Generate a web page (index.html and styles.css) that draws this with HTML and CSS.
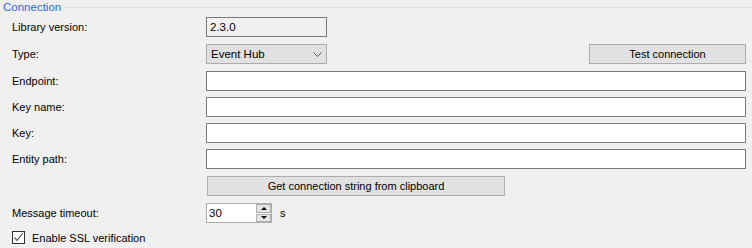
FILE: index.html
```html
<!DOCTYPE html>
<html lang="en">
<head>
    <meta charset="UTF-8">
    <title>Connection</title>
    <link rel="stylesheet" href="styles.css">
</head>
<body>
    <div class="group">
        <div class="group-title">
            <span>Connection</span>
            <div class="group-line"></div>
        </div>

        <div class="form">
            <label class="label">Library version:</label>
            <div class="field">
                <input type="text" class="textbox readonly short" value="2.3.0" readonly>
            </div>

            <label class="label">Type:</label>
            <div class="field split">
                <div class="combo">
                    <span>Event Hub</span>
                    <svg class="chevron" width="9" height="5" viewBox="0 0 9 5">
                        <path d="M0.5 0.5 L4.5 4.5 L8.5 0.5" fill="none" stroke="#555" stroke-width="1"/>
                    </svg>
                </div>
                <button class="btn test-btn">Test connection</button>
            </div>

            <label class="label">Endpoint:</label>
            <div class="field"><input type="text" class="textbox"></div>

            <label class="label">Key name:</label>
            <div class="field"><input type="text" class="textbox"></div>

            <label class="label">Key:</label>
            <div class="field"><input type="text" class="textbox"></div>

            <label class="label">Entity path:</label>
            <div class="field"><input type="text" class="textbox"></div>

            <div class="label"></div>
            <div class="field">
                <button class="btn clip-btn">Get connection string from clipboard</button>
            </div>

            <label class="label">Message timeout:</label>
            <div class="field numeric-row">
                <div class="numeric">
                    <span class="numeric-value">30</span>
                    <div class="spin">
                        <div class="spin-btn"><span class="arrow-up"></span></div>
                        <div class="spin-btn"><span class="arrow-down"></span></div>
                    </div>
                </div>
                <span class="unit">s</span>
            </div>

            <div class="check-row">
                <span class="checkbox">
                    <svg width="11" height="11" viewBox="0 0 11 11">
                        <path d="M1.5 5.5 L4 8.5 L9.5 1.5" fill="none" stroke="#333" stroke-width="1.1"/>
                    </svg>
                </span>
                <span>Enable SSL verification</span>
            </div>
        </div>
    </div>
</body>
</html>
```

FILE: styles.css
```css
/* Page */
body {
    margin: 0;
    background-color: #f0f0f0;
    font-family: 'Liberation Sans', Arial, sans-serif;
    font-size: 11px;
    color: #000;
    width: 752px;
    height: 248px;
    overflow: hidden;
}

/* Group box header */
.group-title {
    display: flex;
    align-items: center;
    height: 14px;
    padding-left: 3px;
    color: #3366d6;
    font-size: 11.5px;
}

.group-line {
    flex: 1;
    height: 1px;
    background: #dcdcdc;
    margin-left: 4px;
    margin-top: 1px;
}

/* Form grid */
.form {
    display: grid;
    grid-template-columns: 194px 1fr;
    grid-template-rows: 27px 27px 26px 26px 26px 27px 27px 28px auto;
    padding: 3px 6px 0 12px;
}

.label {
    line-height: 20px;
}

.field {
    display: flex;
    align-items: flex-start;
}

.split {
    justify-content: space-between;
}

/* Text boxes */
.textbox {
    box-sizing: border-box;
    width: 100%;
    height: 20px;
    margin: 0;
    padding: 0 3px;
    border: 1px solid #7a7a7a;
    background: #fff;
    font-family: inherit;
    font-size: 11.5px;
    outline: none;
}

.readonly {
    background: #f0f0f0;
}

.short {
    width: 121px;
}

/* Combo box */
.combo {
    box-sizing: border-box;
    width: 121px;
    height: 20px;
    border: 1px solid #adadad;
    background: #e1e1e1;
    display: flex;
    align-items: center;
    justify-content: space-between;
    padding: 0 4px 0 4px;
    font-size: 11.5px;
}

.chevron {
    margin-top: 1px;
}

/* Buttons */
.btn {
    box-sizing: border-box;
    height: 20px;
    margin: 0;
    padding: 0;
    border: 1px solid #adadad;
    background: #e1e1e1;
    font-family: inherit;
    font-size: 11px;
    color: #000;
}

.test-btn {
    width: 157px;
}

.clip-btn {
    width: 298px;
    margin-left: 1px;
}

/* Numeric up/down */
.numeric-row {
    align-items: center;
    height: 20px;
}

.numeric {
    box-sizing: border-box;
    width: 66px;
    height: 20px;
    border: 1px solid #adadad;
    background: #fff;
    display: flex;
    align-items: center;
    justify-content: space-between;
    font-size: 11.5px;
}

.numeric-value {
    padding-left: 2px;
}

.spin {
    display: flex;
    flex-direction: column;
    gap: 1px;
    width: 15px;
    height: 18px;
    background: #fff;
}

.spin-btn {
    flex: 1;
    box-sizing: border-box;
    border: 1px solid #adadad;
    background: #e5e5e5;
    display: flex;
    align-items: center;
    justify-content: center;
}

.arrow-up {
    width: 0;
    height: 0;
    border-left: 3px solid transparent;
    border-right: 3px solid transparent;
    border-bottom: 3px solid #000;
}

.arrow-down {
    width: 0;
    height: 0;
    border-left: 3px solid transparent;
    border-right: 3px solid transparent;
    border-top: 3px solid #000;
}

.unit {
    margin-left: 8px;
}

/* Checkbox */
.check-row {
    grid-column: 1 / 3;
    display: flex;
    align-items: center;
    gap: 7px;
}

.checkbox {
    box-sizing: border-box;
    width: 13px;
    height: 13px;
    border: 1px solid #333;
    background: #fff;
    display: flex;
    align-items: center;
    justify-content: center;
}
```
